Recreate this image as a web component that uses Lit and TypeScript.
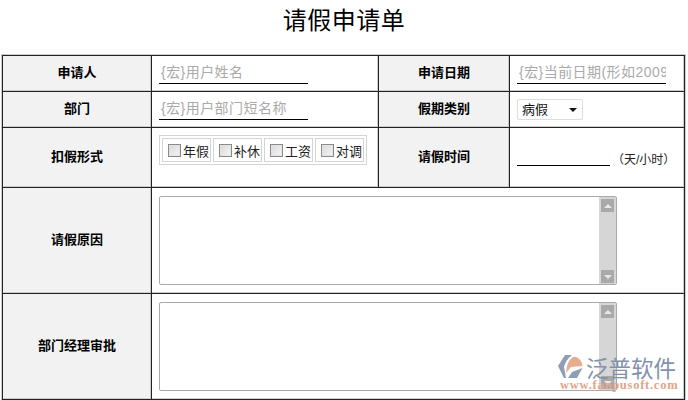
import { LitElement, html, css } from "lit";
import { customElement } from "lit/decorators.js";

@customElement("app-root")
export class AppRoot extends LitElement {
  static styles = css`
    :host { display: block; width: 688px; height: 400px; overflow: hidden; background: #fff; position: relative; font-family: "Liberation Sans","Noto Sans CJK SC",sans-serif; color: #000; }
    * { box-sizing: border-box; }
    h1 { margin: 0 0 1px; height: 54px; padding-top: 2px; font: 400 24px/34px "Noto Sans CJK SC",serif; text-align: center; letter-spacing: .5px; }
    .t { display: grid; grid-template-columns: 149px 227px 131px 175px; grid-template-rows: 36px 36px 60px 106px 106px; margin-left: 2px; width: 683px; border-top: 1px solid #222; border-left: 1px solid #222; outline: 1px solid #ccc; }
    .c { border-right: 1px solid #222; border-bottom: 1px solid #222; box-shadow: inset -1px -1px 0 #ccc; display: flex; align-items: center; padding-left: 7px; min-width: 0; }
    .l { background: #f2f2f2; justify-content: center; padding: 0 0 4px; font-weight: 700; font-size: 13px; }
    .m { font-size: 14px; color: #aaa; width: 149px; border-bottom: 1px solid #000; height: 22px; line-height: 20px; padding-left: 2px; letter-spacing: .45px; white-space: nowrap; overflow: hidden; margin-bottom: 1px; }
    .sel { width: 66px; height: 21px; border: 1px solid #ddd; border-radius: 2px; font-size: 13px; color: #111; display: flex; align-items: center; justify-content: space-between; padding: 0 5px 3px 4px; }
    .arrow { width: 0; height: 0; border: 4px solid transparent; border-top: 4px solid #111; border-bottom: 0; margin-top: 4px; }
    .boxes { display: flex; gap: 2px; border: 1px solid #d4d4d4; padding: 2px; height: 30px; align-self: flex-start; margin-top: 7px; }
    .box { display: flex; align-items: center; gap: 2px; border: 1px solid #d4d4d4; padding: 0 1px 0 5px; font-size: 13px; color: #222; height: 24px; }
    .cb { width: 13px; height: 13px; border: 1px solid #8a8a8a; background: linear-gradient(135deg,#d8d8d8,#f6f6f6); box-shadow: inset 0 0 0 1px #e4e4e4; }
    .time { align-items: flex-end; padding-bottom: 21px; }
    .u { width: 93px; border-bottom: 1px solid #000; height: 1px; }
    .unit { font-size: 12px; color: #222; margin-left: 2px; line-height: 14px; margin-bottom: -1px; }
    .area { width: 458px; height: 89px; border: 1px solid #aaa; border-radius: 2px; display: flex; justify-content: flex-end; }
    .bar { width: 17px; background: #d6d6d6; display: flex; flex-direction: column; justify-content: space-between; align-items: center; padding: 2px 0 1px; }
    .btn { width: 13px; height: 13px; background: #a9a9a9; display: flex; align-items: center; justify-content: center; }
    .up { width: 0; height: 0; border: 4px solid transparent; border-bottom: 4px solid #e8e8e8; border-top: 0; }
    .dn { width: 0; height: 0; border: 4px solid transparent; border-top: 4px solid #e8e8e8; border-bottom: 0; }
    .wide { grid-column: 2 / 5; }
    .logo { position: absolute; left: 558px; top: 355px; width: 124px; display: flex; flex-direction: column; gap: 1px; }
    .top { display: flex; align-items: center; gap: 3px; height: 24px; }
    .brand { font: 400 22.5px/24px "Noto Sans CJK SC",sans-serif; color: #8392ab; white-space: nowrap; }
    .url { margin: 0 0 0 2px; font: 700 12.5px/10px "Liberation Serif",serif; color: #e3a488; letter-spacing: .75px; white-space: nowrap; }
    svg { display: block; opacity: .95; }
  `;

  private area() {
    return html`<div class="area"><div class="bar"><div class="btn"><div class="up"></div></div><div class="btn"><div class="dn"></div></div></div></div>`;
  }

  render() {
    return html`
      <h1>请假申请单</h1>
      <div class="t">
        <div class="c l">申请人</div>
        <div class="c"><div class="m">{宏}用户姓名</div></div>
        <div class="c l">申请日期</div>
        <div class="c"><div class="m">{宏}当前日期(形如2009-</div></div>
        <div class="c l">部门</div>
        <div class="c"><div class="m">{宏}用户部门短名称</div></div>
        <div class="c l">假期类别</div>
        <div class="c"><div class="sel">病假<span class="arrow"></span></div></div>
        <div class="c l">扣假形式</div>
        <div class="c"><div class="boxes">
          ${["年假", "补休", "工资", "对调"].map((t) => html`<div class="box"><span class="cb"></span>${t}</div>`)}
        </div></div>
        <div class="c l">请假时间</div>
        <div class="c time"><div class="u"></div><div class="unit">（天/小时）</div></div>
        <div class="c l">请假原因</div>
        <div class="c wide">${this.area()}</div>
        <div class="c l">部门经理审批</div>
        <div class="c wide">${this.area()}</div>
      </div>
      <div class="logo">
        <div class="top">
          <svg width="25" height="24" viewBox="0 0 25 24"><path d="M7 0h7C9 4 7 8 6 12l2 11H6L0 11z" fill="#8a99b3"/><path d="M15 2c5-1 9 4 9.500 9L13 12l-5 6 1-7c1-4 3-7 6-9z" fill="#e6a98a"/><path d="M24.500 13 19 23h-9l4-6z" fill="#8a99b3"/></svg>
          <div class="brand">泛普软件</div>
        </div>
        <div class="url">www.fanpusoft.com</div>
      </div>
    `;
  }
}
